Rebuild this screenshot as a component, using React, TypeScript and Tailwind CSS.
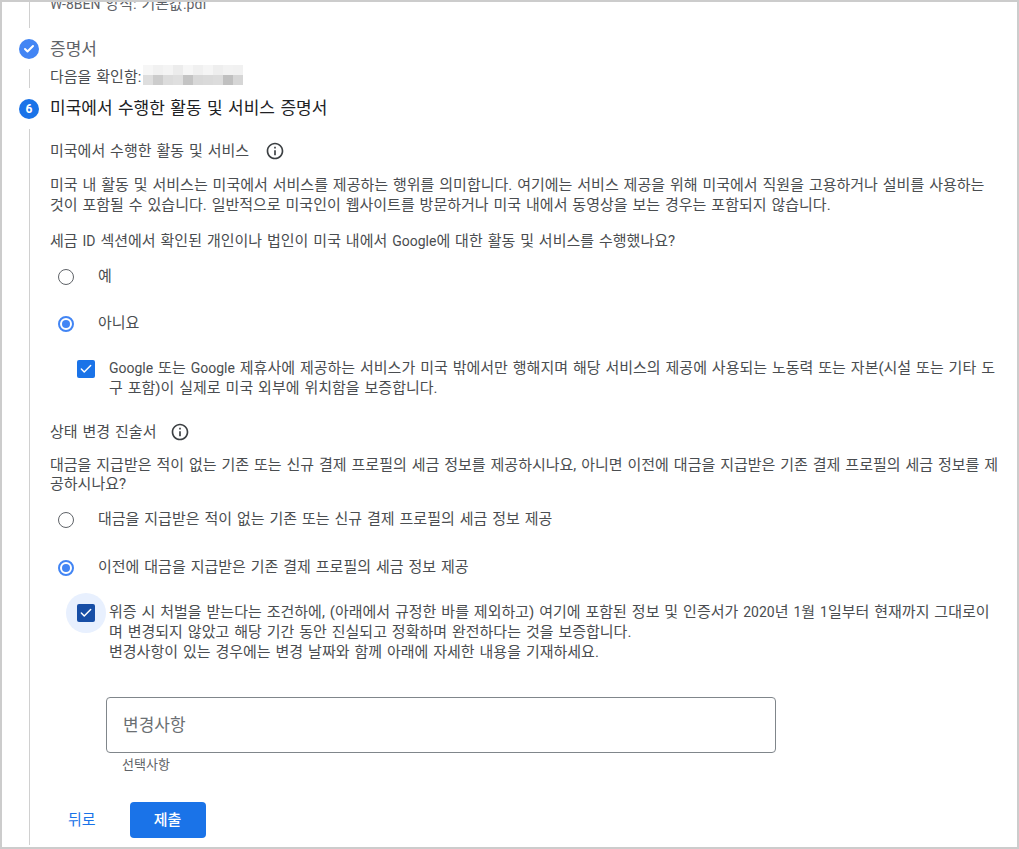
import type { ReactNode } from 'react';
import { Check } from 'lucide-react';

const BLUR_CELLS = [
	'#f6f6f6', '#f1f1f1', '#f4f4f4', '#ececec', '#f6f6f6', '#f0f0f0', '#f5f5f5', '#eeeeee', '#f2f2f2', '#f1f1f1',
	'#dedede', '#cccccc', '#dcdcdc', '#dfdfdf', '#c4c4c4', '#d8d8d8', '#dadada', '#dcdcdc', '#c0c0c0', '#d6d6d6',
];

function Rail({ children }: { children?: ReactNode }) {
	return <div className="flex w-5 shrink-0 flex-col items-center">{children}</div>;
}

function Line({ className }: { className: string }) {
	return <div className={`w-px bg-[#d0d0d0] ${className}`} />;
}

// latin runs sit a step smaller than the hangul around them
function L({ children }: { children: ReactNode }) {
	return <span className="text-[14px]">{children}</span>;
}

function InfoIcon({ className }: { className: string }) {
	return (
		<svg viewBox="0 0 24 24" className={`size-5 fill-[#3c4043] ${className}`}>
			<path d="M11 7h2v2h-2zm0 4h2v6h-2zm1-9C6.48 2 2 6.48 2 12s4.48 10 10 10 10-4.48 10-10S17.52 2 12 2zm0 18c-4.41 0-8-3.59-8-8s3.59-8 8-8 8 3.59 8 8-3.59 8-8 8z" />
		</svg>
	);
}

function Radio({ checked }: { checked?: boolean }) {
	return (
		<span
			className={`mt-[2px] flex size-4 shrink-0 items-center justify-center rounded-full ${checked ? 'border-2 border-[#4285f4]' : 'border-[1.5px] border-[#5f6368]'}`}
		>
			{checked && <span className="size-2 rounded-full bg-[#4285f4]" />}
		</span>
	);
}

function RadioRow({ label, checked, className }: { label: string; checked?: boolean; className: string }) {
	return (
		<div className={`flex h-5 items-center pl-2 ${className}`}>
			<Radio checked={checked} />
			<span className="ml-[24px]">{label}</span>
		</div>
	);
}

function Checkbox({ dark }: { dark?: boolean }) {
	return (
		<span
			className={`flex size-[18px] shrink-0 items-center justify-center rounded-[2px] ${dark ? 'bg-[#174ea6]' : 'bg-[#1a73e8]'}`}
		>
			<Check className="size-[14px] text-white" strokeWidth={2.5} />
		</span>
	);
}

export default function App() {
	return (
		<div className='h-[849px] w-[1019px] overflow-hidden border-2 border-[#cccccc] bg-white font-["Roboto","Noto_Sans_CJK_KR",sans-serif] text-[15px] leading-5 [word-spacing:1.2px] text-[#4a4d50]'>
			<div className="flex pl-[17px]">
				<Rail>
					<Line className="h-[26px]" />
				</Rail>
				<div className="ml-[11px] -mt-[8px] h-[26px] text-[#5f6368]">
					<L>W-8BEN</L> 양식: 기본값<L>.pdf</L>
				</div>
			</div>

			<div className="mt-[11px] flex pl-[17px]">
				<Rail>
					<span className="flex size-5 items-center justify-center rounded-full bg-[#4285f4]">
						<Check className="size-3 text-white" strokeWidth={4} />
					</span>
				</Rail>
				<div className="ml-[11px] text-[17px] leading-5 text-[#5f6368]">증명서</div>
			</div>

			<div className="mt-[10px] flex pl-[17px]">
				<Rail>
					<Line className="h-[19px]" />
				</Rail>
				<div className="ml-[11px] -mt-[4px] flex h-5">
					<span className="mt-[2px] w-[93px] whitespace-nowrap">다음을 확인함:</span>
					<div className="grid h-5 w-[100px] grid-cols-10 grid-rows-2">
						{BLUR_CELLS.map((c, i) => (
							<span key={i} style={{ backgroundColor: c }} />
						))}
					</div>
				</div>
			</div>

			<div className="flex pl-[17px]">
				<Rail>
					<span className="mt-[11px] flex size-5 items-center justify-center rounded-full bg-[#1a73e8] text-[12px] font-bold text-white">
						6
					</span>
					<Line className="mt-[10px] h-[716px]" />
				</Rail>
				<div className="ml-[11px] w-[949px] min-w-0">
					<h2 className="mt-[8px] text-[17px] leading-6 font-normal text-[#202124]">미국에서 수행한 활동 및 서비스 증명서</h2>

					<div className="mt-[21px] flex h-5 items-center">
						<span>미국에서 수행한 활동 및 서비스</span>
						<InfoIcon className="ml-[16px]" />
					</div>
					<p className="mt-[14px]">
						미국 내 활동 및 서비스는 미국에서 서비스를 제공하는 행위를 의미합니다. 여기에는 서비스 제공을 위해 미국에서 직원을 고용하거나 설비를 사용하는 것이 포함될 수 있습니다. 일반적으로 미국인이 웹사이트를 방문하거나 미국 내에서 동영상을 보는 경우는 포함되지 않습니다.
					</p>
					<p className="mt-[16px]">
						세금 <L>ID</L> 섹션에서 확인된 개인이나 법인이 미국 내에서 <L>Google</L>에 대한 활동 및 서비스를 수행했나요?
					</p>

					<RadioRow label="예" className="mt-[15px]" />
					<RadioRow label="아니요" className="mt-[27px]" checked />

					<div className="mt-[27px] flex pl-[27px]">
						<Checkbox />
						<p className="ml-[14px] -mt-[2px]">
							<L>Google</L> 또는 <L>Google</L> 제휴사에 제공하는 서비스가 미국 밖에서만 행해지며 해당 서비스의 제공에 사용되는 노동력 또는 자본(시설 또는 기타 도구 포함)이 실제로 미국 외부에 위치함을 보증합니다.
						</p>
					</div>

					<div className="mt-[24px] flex h-5 items-center">
						<span>상태 변경 진술서</span>
						<InfoIcon className="ml-[14px]" />
					</div>
					<p className="mt-[14px] leading-[19px]">
						대금을 지급받은 적이 없는 기존 또는 신규 결제 프로필의 세금 정보를 제공하시나요, 아니면 이전에 대금을 지급받은 기존 결제 프로필의 세금 정보를 제공하시나요?
					</p>

					<RadioRow label="대금을 지급받은 적이 없는 기존 또는 신규 결제 프로필의 세금 정보 제공" className="mt-[15px]" />
					<RadioRow label="이전에 대금을 지급받은 기존 결제 프로필의 세금 정보 제공" className="mt-[28px]" checked />

					<div className="mt-[27px] flex pl-[27px]">
						<span className="relative flex">
							<span className="absolute -top-[11px] -left-[11px] size-10 rounded-full bg-[#e8f0fe]" />
							<span className="relative">
								<Checkbox dark />
							</span>
						</span>
						<p className="ml-[14px] -mt-[2px]">
							위증 시 처벌을 받는다는 조건하에, (아래에서 규정한 바를 제외하고) 여기에 포함된 정보 및 인증서가 <L>2020</L>년 <L>1</L>월 <L>1</L>일부터 현재까지 그대로이며 변경되지 않았고 해당 기간 동안 진실되고 정확하며 완전하다는 것을 보증합니다.
							<br />
							변경사항이 있는 경우에는 변경 날짜와 함께 아래에 자세한 내용을 기재하세요.
						</p>
					</div>

					<div className="ml-[56px] mt-[35px] flex h-[56px] w-[670px] items-center rounded border border-[#80868b] pl-4 text-[17px] text-[#6b6f73]">
						변경사항
					</div>
					<div className="ml-[72px] mt-[4px] text-[13px] leading-4 text-[#5f6368]">선택사항</div>

					<div className="mt-[29px] flex items-center">
						<button className="ml-[18px] text-[#1a73e8]">뒤로</button>
						<button className="ml-[34px] h-9 w-[76px] rounded bg-[#1a73e8] font-medium text-white">제출</button>
					</div>
				</div>
			</div>
		</div>
	);
}
